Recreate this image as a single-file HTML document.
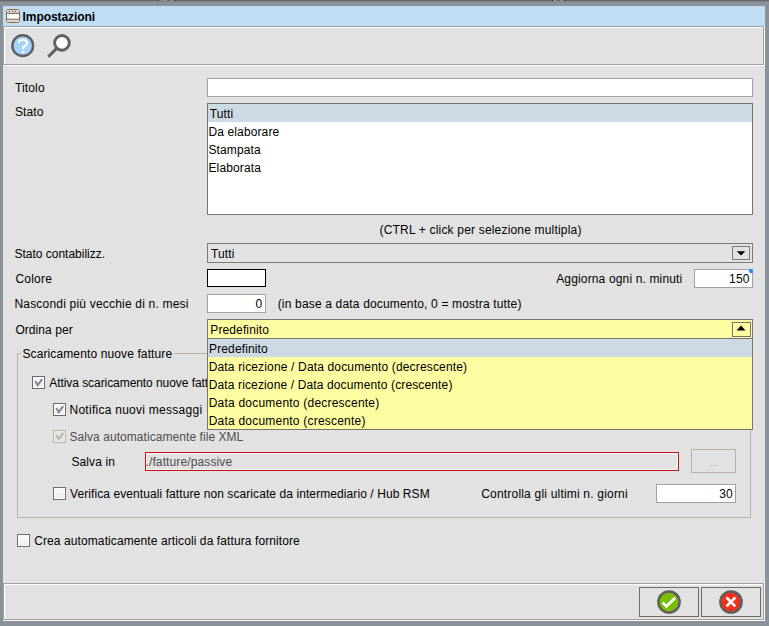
<!DOCTYPE html>
<html><head><meta charset="utf-8"><style>
html,body{margin:0;padding:0}
body{width:769px;height:626px;position:relative;overflow:hidden;background:#8a9199;font-family:"Liberation Sans",sans-serif;font-size:12px}
div{position:absolute}
.t{white-space:nowrap;line-height:14px;font-size:12px;color:#000}
svg{position:absolute}
</style></head><body>
<div style="left:0px;top:0px;width:769px;height:1px;background:#6a6a6a"></div>
<div style="left:0px;top:1px;width:769px;height:1px;background:#7d8288"></div>
<div style="left:158px;top:0px;width:17px;height:1px;background:#8e8e8e"></div>
<div style="left:158px;top:0px;width:1px;height:1px;background:#222"></div>
<div style="left:174px;top:0px;width:1px;height:1px;background:#222"></div>
<div style="left:167px;top:0px;width:3px;height:1px;background:#666b70"></div>
<div style="left:552px;top:0px;width:13px;height:1px;background:#8e8e8e"></div>
<div style="left:552px;top:0px;width:1px;height:1px;background:#222"></div>
<div style="left:564px;top:0px;width:1px;height:1px;background:#222"></div>
<div style="left:557px;top:0px;width:3px;height:1px;background:#666b70"></div>
<div style="left:3px;top:6px;width:762px;height:20px;background:#bfddf4"></div>
<div style="left:3px;top:26px;width:762px;height:595px;background:#e2e2e2"></div>
<div style="left:3px;top:26px;width:761px;height:1px;background:#a0a0a0"></div>
<div style="left:3px;top:26px;width:1px;height:39px;background:#a0a0a0"></div>
<div style="left:4px;top:27px;width:759px;height:1px;background:#fff"></div>
<div style="left:4px;top:27px;width:1px;height:37px;background:#fff"></div>
<div style="left:4px;top:64px;width:760px;height:1px;background:#a0a0a0"></div>
<div style="left:763px;top:27px;width:1px;height:38px;background:#a0a0a0"></div>
<div style="left:3px;top:65px;width:762px;height:1px;background:#fff"></div>
<div style="left:764px;top:26px;width:1px;height:40px;background:#fff"></div>
<div style="left:3px;top:583px;width:761px;height:1px;background:#a0a0a0"></div>
<div style="left:3px;top:583px;width:1px;height:37px;background:#a0a0a0"></div>
<div style="left:4px;top:584px;width:759px;height:1px;background:#fff"></div>
<div style="left:4px;top:584px;width:1px;height:35px;background:#fff"></div>
<div style="left:4px;top:619px;width:760px;height:1px;background:#a0a0a0"></div>
<div style="left:763px;top:584px;width:1px;height:36px;background:#a0a0a0"></div>
<div style="left:3px;top:620px;width:762px;height:1px;background:#fff"></div>
<div style="left:764px;top:583px;width:1px;height:38px;background:#fff"></div>
<svg style="left:6px;top:9px" width="14" height="14" viewBox="0 0 14 14">
<rect x="0.5" y="0.5" width="13" height="13" rx="2" ry="2" fill="#fff" stroke="#a4662e" stroke-width="1"/>
<rect x="1" y="1" width="12" height="3" fill="#d6d6d6"/>
<rect x="1" y="10.6" width="12" height="2.4" fill="#d6d6d6"/>
<rect x="1" y="3.9" width="12" height="1" fill="#666"/>
<rect x="1" y="9.7" width="12" height="1" fill="#666"/>
<circle cx="3.4" cy="2.3" r="0.65" fill="#555"/><circle cx="6.4" cy="2.3" r="0.65" fill="#555"/><circle cx="9.4" cy="2.3" r="0.65" fill="#555"/>
</svg>
<svg style="left:9px;top:32px" width="28" height="28" viewBox="0 0 28 28">
<circle cx="13.75" cy="13.65" r="10.4" fill="#a6d3fb" stroke="#5f5f5f" stroke-width="2.4"/>
<path d="M9.9 11 C9.9 8.7 11.8 7.7 14 7.7 C16.3 7.7 18 9 18 11 C18 13.2 15.4 13.8 14.1 15.6 L14.1 17.4" fill="none" stroke="#fff" stroke-width="2.1"/>
<rect x="12.9" y="19" width="2.2" height="2" fill="#fff"/>
</svg>
<svg style="left:44px;top:32px" width="30" height="28" viewBox="0 0 30 28">
<circle cx="17.95" cy="10.85" r="7.35" fill="#fff" stroke="#5f5f5f" stroke-width="2.9"/>
<line x1="12.4" y1="16.6" x2="4.3" y2="24.7" stroke="#5f5f5f" stroke-width="3"/>
</svg>
<div style="left:207px;top:78px;width:546px;height:19px;box-sizing:border-box;border:1px solid #a2a2a2;background:#fff"></div>
<div style="left:207px;top:103px;width:546px;height:112px;box-sizing:border-box;border:1px solid #76726d;background:#fff"></div>
<div style="left:208px;top:104px;width:544px;height:18px;background:#cdd9e3"></div>
<div style="left:207px;top:243px;width:546px;height:20px;box-sizing:border-box;border:1px solid #7d7974;background:#e2e2e2"></div>
<div style="left:732px;top:246px;width:18px;height:14px;box-sizing:border-box;border:1px solid #7d7974;background:#e2e2e2"></div>
<svg style="left:736px;top:251px" width="10" height="5" viewBox="0 0 10 5"><path d="M0.7 0.2 L9.3 0.2 L5 4.4 Z" fill="#000"/></svg>
<div style="left:207px;top:269px;width:59px;height:18px;box-sizing:border-box;border:1px solid #000;background:#fff"></div>
<div style="left:694px;top:269px;width:59px;height:19px;box-sizing:border-box;border:1px solid #a2a2a2;background:#fff"></div>
<svg style="left:748px;top:269px" width="5" height="5" viewBox="0 0 5 5"><circle cx="3.2" cy="2" r="2.3" fill="#2f86f0"/></svg>
<div style="left:207px;top:294px;width:59px;height:19px;box-sizing:border-box;border:1px solid #a2a2a2;background:#fff"></div>
<div style="left:17px;top:353px;width:1px;height:165px;background:#b9b1a6"></div>
<div style="left:17px;top:353px;width:4px;height:1px;background:#b9b1a6"></div>
<div style="left:174px;top:353px;width:577px;height:1px;background:#b9b1a6"></div>
<div style="left:17px;top:517px;width:734px;height:1px;background:#b9b1a6"></div>
<div style="left:750px;top:353px;width:1px;height:165px;background:#b9b1a6"></div>
<div style="left:32px;top:376px;width:13px;height:13px;box-sizing:border-box;border:1px solid #6e6b68;background:linear-gradient(#f9f9f9,#ececec);box-shadow:inset 0 0 0 1px #fff"></div>
<svg style="left:32px;top:376px" width="13" height="13" viewBox="0 0 13 13"><path d="M3.3 5.0 L5.7 9.2 L10.1 3.2" fill="none" stroke="#7d8893" stroke-width="2.0"/></svg>
<div style="left:53px;top:403px;width:13px;height:13px;box-sizing:border-box;border:1px solid #6e6b68;background:linear-gradient(#f9f9f9,#ececec);box-shadow:inset 0 0 0 1px #fff"></div>
<svg style="left:53px;top:403px" width="13" height="13" viewBox="0 0 13 13"><path d="M3.3 5.0 L5.7 9.2 L10.1 3.2" fill="none" stroke="#7d8893" stroke-width="2.0"/></svg>
<div style="left:53px;top:430px;width:13px;height:13px;box-sizing:border-box;border:1px solid #bdb6ac;background:#e3e3e3;box-shadow:inset 0 0 0 1px #eaeaea"></div>
<svg style="left:53px;top:430px" width="13" height="13" viewBox="0 0 13 13"><path d="M3.3 5.0 L5.7 9.2 L10.1 3.2" fill="none" stroke="#bcb4a9" stroke-width="2.0"/></svg>
<div style="left:53px;top:487px;width:13px;height:13px;box-sizing:border-box;border:1px solid #6e6b68;background:linear-gradient(#f9f9f9,#ececec);box-shadow:inset 0 0 0 1px #fff"></div>
<div style="left:17px;top:534px;width:13px;height:13px;box-sizing:border-box;border:1px solid #6e6b68;background:linear-gradient(#f9f9f9,#ececec);box-shadow:inset 0 0 0 1px #fff"></div>
<div style="left:145px;top:452px;width:534px;height:19px;box-sizing:border-box;border:1px solid #c90f0f;background:#e2e2e2"></div>
<div style="left:146px;top:453px;width:532px;height:17px;box-sizing:border-box;border:1px solid #eef6f6"></div>
<div style="left:691px;top:449px;width:45px;height:24px;box-sizing:border-box;border:1px solid #bab2a7;background:#e2e2e2"></div>
<div style="left:710px;top:465px;width:1px;height:1px;background:#aaa6b0"></div>
<div style="left:713px;top:465px;width:1px;height:1px;background:#aaa6b0"></div>
<div style="left:716px;top:465px;width:1px;height:1px;background:#aaa6b0"></div>
<div style="left:656px;top:484px;width:80px;height:19px;box-sizing:border-box;border:1px solid #a2a2a2;background:#fff"></div>
<div style="left:639px;top:587px;width:60px;height:30px;box-sizing:border-box;border:1px solid #6f6b66;background:#e2e2e2"></div>
<div style="left:701px;top:587px;width:60px;height:30px;box-sizing:border-box;border:1px solid #6f6b66;background:#e2e2e2"></div>
<svg style="left:655px;top:588px" width="28" height="28" viewBox="0 0 28 28">
<circle cx="14" cy="14" r="10.6" fill="#78bf00" stroke="#5f5f5f" stroke-width="2.5"/>
<path d="M7.6 14.6 L11.4 18.4 L20.2 9.8" fill="none" stroke="#fff" stroke-width="2.8"/>
</svg>
<svg style="left:717px;top:588px" width="28" height="28" viewBox="0 0 28 28">
<circle cx="14" cy="14" r="10.6" fill="#f3301c" stroke="#5f5f5f" stroke-width="2.5"/>
<path d="M9.5 9.5 L18.3 18.3 M18.3 9.5 L9.5 18.3" fill="none" stroke="#fff" stroke-width="2.6"/>
</svg>
<div style="left:207px;top:319px;width:546px;height:20px;box-sizing:border-box;border:1px solid #77736e;background:#fffda2"></div>
<div style="left:732px;top:322px;width:19px;height:15px;box-sizing:border-box;border:1px solid #77736e;background:#fffda2"></div>
<svg style="left:736px;top:325px" width="10" height="6" viewBox="0 0 10 6"><path d="M0.5 5.5 L9.5 5.5 L5 0.5 Z" fill="#000"/></svg>
<div class="t" style="left:22.60px;top:10px;letter-spacing:-0.082px;color:#000;font-weight:bold">Impostazioni</div>
<div class="t" style="left:15.00px;top:81px;letter-spacing:0.14px;color:#000;">Titolo</div>
<div class="t" style="left:14.90px;top:105px;letter-spacing:0.12px;color:#000;">Stato</div>
<div class="t" style="left:209.70px;top:107px;letter-spacing:0.12px;color:#000;">Tutti</div>
<div class="t" style="left:208.50px;top:125px;letter-spacing:0.12px;color:#000;">Da elaborare</div>
<div class="t" style="left:208.50px;top:143px;letter-spacing:0.12px;color:#000;">Stampata</div>
<div class="t" style="left:208.50px;top:161px;letter-spacing:0.12px;color:#000;">Elaborata</div>
<div class="t" style="left:379.50px;top:223px;letter-spacing:0.183px;color:#000;">(CTRL + click per selezione multipla)</div>
<div class="t" style="left:14.40px;top:247px;letter-spacing:0.0px;color:#000;">Stato contabilizz.</div>
<div class="t" style="left:211.00px;top:247px;letter-spacing:0.12px;color:#000;">Tutti</div>
<div class="t" style="left:15.40px;top:272px;letter-spacing:0.22px;color:#000;">Colore</div>
<div class="t" style="left:556.20px;top:272px;letter-spacing:0.15px;color:#000;">Aggiorna ogni n. minuti</div>
<div class="t" style="left:729.10px;top:272px;letter-spacing:0.12px;color:#000;">150</div>
<div class="t" style="left:14.40px;top:297px;letter-spacing:0.2px;color:#000;">Nascondi più vecchie di n. mesi</div>
<div class="t" style="left:255.40px;top:297px;letter-spacing:0.12px;color:#000;">0</div>
<div class="t" style="left:277.70px;top:297px;letter-spacing:0.17px;color:#000;">(in base a data documento, 0 = mostra tutte)</div>
<div class="t" style="left:15.40px;top:323px;letter-spacing:0.067px;color:#000;">Ordina per</div>
<div class="t" style="left:210.30px;top:323px;letter-spacing:0.12px;color:#000;">Predefinito</div>
<div class="t" style="left:22.40px;top:347px;letter-spacing:0.12px;color:#000;">Scaricamento nuove fatture</div>
<div class="t" style="left:49.30px;top:376px;letter-spacing:-0.067px;color:#000;">Attiva scaricamento nuove fatture</div>
<div class="t" style="left:69.50px;top:403px;letter-spacing:0.266px;color:#000;">Notifica nuovi messaggi</div>
<div class="t" style="left:69.50px;top:430px;letter-spacing:0.059px;color:#4d4d4d;">Salva automaticamente file XML</div>
<div class="t" style="left:71.40px;top:455px;letter-spacing:0.12px;color:#000;">Salva in</div>
<div class="t" style="left:145.50px;top:455px;letter-spacing:0.12px;color:#4d4d4d;">./fatture/passive</div>
<div class="t" style="left:70.00px;top:487px;letter-spacing:0.083px;color:#000;">Verifica eventuali fatture non scaricate da intermediario / Hub RSM</div>
<div class="t" style="left:481.20px;top:487px;letter-spacing:0.197px;color:#000;">Controlla gli ultimi n. giorni</div>
<div class="t" style="left:719.30px;top:487px;letter-spacing:0.12px;color:#000;">30</div>
<div class="t" style="left:34.20px;top:534px;letter-spacing:0.098px;color:#000;">Crea automaticamente articoli da fattura fornitore</div>
<div style="left:207px;top:338px;width:546px;height:92px;box-sizing:border-box;border:1px solid #77736e;background:#fffda2"></div>
<div style="left:208px;top:339px;width:544px;height:18px;background:#cdd9e3"></div>
<div class="t" style="left:209.00px;top:342px;letter-spacing:0.14px;color:#000;">Predefinito</div>
<div class="t" style="left:208.70px;top:360px;letter-spacing:0.157px;color:#000;">Data ricezione / Data documento (decrescente)</div>
<div class="t" style="left:208.70px;top:378px;letter-spacing:0.133px;color:#000;">Data ricezione / Data documento (crescente)</div>
<div class="t" style="left:208.70px;top:396px;letter-spacing:0.215px;color:#000;">Data documento (decrescente)</div>
<div class="t" style="left:208.70px;top:414px;letter-spacing:0.212px;color:#000;">Data documento (crescente)</div>
</body></html>
